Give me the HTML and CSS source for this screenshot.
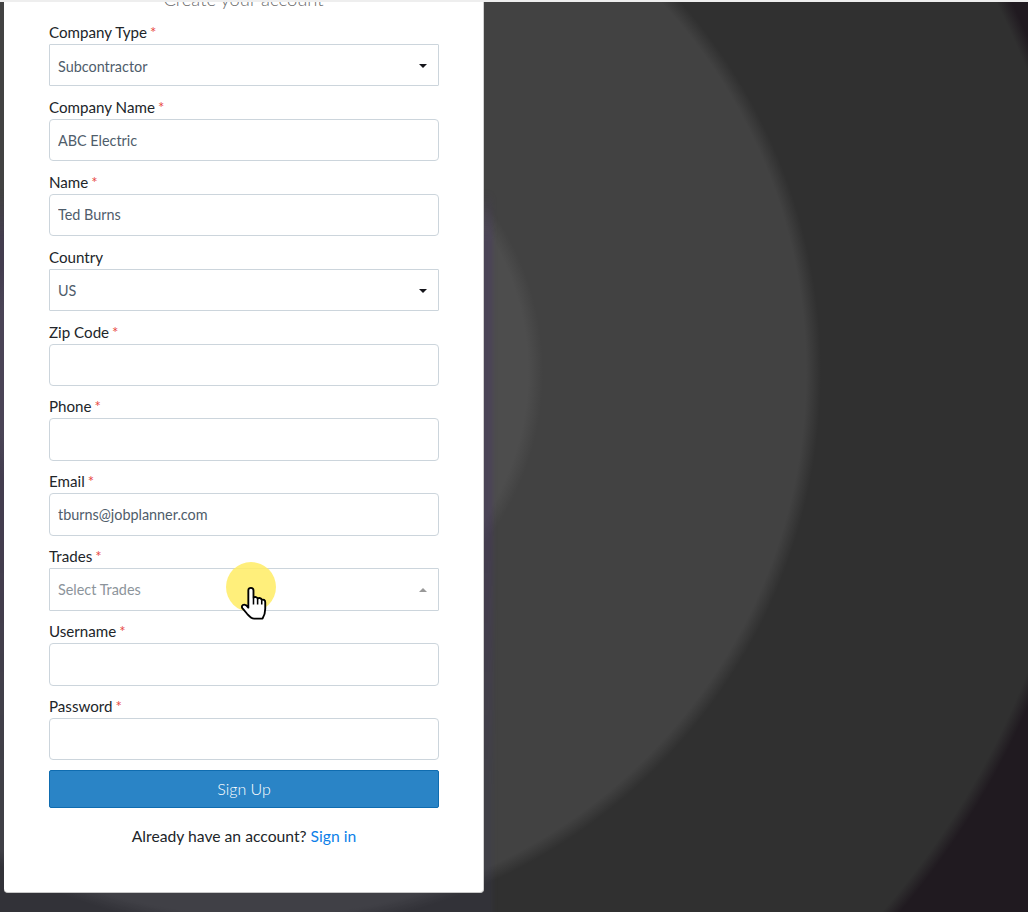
FILE: index.html
```html
<!DOCTYPE html>
<html lang="en">
<head>
<meta charset="utf-8">
<title>Create your account</title>
<link rel="stylesheet" href="styles.css">
</head>
<body>
<div class="topline"></div>
<div class="shade"></div>
<main class="card">
  <h1 class="title">Create your account</h1>
  <form class="form">
    <div class="field"><label class="label">Company Type<span class="req">*</span></label>
      <div class="control select first">Subcontractor<span class="caret"></span></div></div>
    <div class="field"><label class="label">Company Name<span class="req">*</span></label>
      <input class="control" value="ABC Electric"></div>
    <div class="field"><label class="label">Name<span class="req">*</span></label>
      <input class="control" value="Ted Burns"></div>
    <div class="field"><label class="label">Country</label>
      <div class="control select">US<span class="caret"></span></div></div>
    <div class="field"><label class="label">Zip Code<span class="req">*</span></label>
      <input class="control"></div>
    <div class="field"><label class="label">Phone<span class="req">*</span></label>
      <input class="control"></div>
    <div class="field"><label class="label">Email<span class="req">*</span></label>
      <input class="control" value="tburns@jobplanner.com"></div>
    <div class="field"><label class="label">Trades<span class="req">*</span></label>
      <div class="control select placeholder">Select Trades<span class="caret up"></span></div></div>
    <div class="field"><label class="label">Username<span class="req">*</span></label>
      <input class="control"></div>
    <div class="field"><label class="label">Password<span class="req">*</span></label>
      <input class="control" type="password"></div>
    <button class="submit" type="button">Sign Up</button>
  </form>
  <p class="signin">Already have an account? <a class="link" href="#">Sign in</a></p>
</main>
<div class="pointer">
  <svg class="hand" width="26" height="33" viewBox="0 0 25 32" aria-hidden="true">
    <path d="M7 3.2C7 1.6 8 .9 9.5.9S12 1.9 12 3.5V10.2C13.5 9.2 15.5 9.6 16 11.2 17.5 10.2 19.5 10.7 20 12.5 21.5 11.7 23.4 12.6 23.4 14.7V21C23.4 25 22.6 27.6 20.8 30.6H12.6C10.2 30.6 8 28.4 6 26.2L1.4 20.8C.1 19.2 1 17.1 3 17.1 4.6 17.1 6 18.5 7 20Z" fill="#fff" stroke="#000" stroke-width="1.8" stroke-linejoin="round"/>
    <path d="M12 10.5V17M16 11.5V17M20 12.8V17" fill="none" stroke="#000" stroke-width="1.5"/>
  </svg>
</div>
</body>
</html>
```
FILE: styles.css
```css
* { box-sizing: border-box; }
html, body { height: 100%; }
body {
  margin: 0;
  height: 912px;
  overflow: hidden;
  position: relative;
  font-family: "Lato", sans-serif;
  background: radial-gradient(circle at 262px 372px,
    #4d4d4d 0, #4d4d4d 266px, #424242 281px,
    #424242 544px, #303030 559px,
    #303030 822px, #201a20 836px);
}
.topline { height: 2px; background: #eeeeee; }
.shade {
  position: absolute;
  left: -10px;
  top: 190px;
  width: 503px;
  height: 740px;
  border-radius: 8px;
  background: linear-gradient(to bottom,
    rgba(72, 50, 110, 0),
    rgba(72, 50, 110, .3) 50px,
    rgba(72, 50, 110, .3) 340px,
    rgba(60, 60, 88, .22) 600px);
  filter: blur(2px);
}
.card {
  position: relative;
  width: 480px;
  height: 891px;
  margin-left: 4px;
  padding: 0 45px;
  overflow: hidden;
  background: #fff;
  border-right: 1px solid #d0d0d0;
  border-bottom: 1px solid #c8c8c8;
  border-radius: 0 0 4px 4px;
}
.title {
  margin: -15px 0 9px;
  height: 24px;
  font-size: 18.4px;
  line-height: 24px;
  font-weight: 300;
  color: #6c6c6c;
  text-align: center;
}
.form { width: 390px; }
.field { margin-bottom: 8.5px; }
.label {
  display: block;
  height: 24px;
  font-size: 15.15px;
  line-height: 24px;
  color: #212529;
}
.req { margin-left: 3px; color: #e8483f; font-size: 15px; }
.control {
  display: flex;
  align-items: center;
  width: 100%;
  height: 42.4px;
  padding: 0 8px;
  border: 1px solid #ccd5dc;
  border-radius: 4px;
  background: #fff;
  font-family: inherit;
  font-size: 14.4px;
  color: #4f5d6b;
  outline: none;
}
.select {
  padding: 2px 8px 0;
  border-radius: 1px;
}
.placeholder { color: #8c949b; padding: 0 8px; }
.caret {
  margin-left: auto;
  margin-right: 3px;
  width: 0;
  height: 0;
  border-left: 4px solid transparent;
  border-right: 4px solid transparent;
  border-top: 4px solid #15151b;
}
.caret.up {
  margin-top: 2px;
  border-top: 0;
  border-bottom: 4px solid #999;
}
.submit {
  display: block;
  width: 100%;
  height: 38px;
  margin-top: 10px;
  padding: 0 0 2px;
  border: 1px solid #0f6cb0;
  border-radius: 2px;
  background: #2a84c6;
  font-family: inherit;
  font-size: 16px;
  font-weight: 300;
  color: #fff;
}
.signin {
  width: 390px;
  margin: 16px 0 0;
  font-size: 15.7px;
  line-height: 24px;
  text-align: center;
  color: #212529;
}
.link { color: #0d7fe8; text-decoration: none; }
.pointer {
  position: absolute;
  left: 226px;
  top: 562px;
  width: 50px;
  height: 50px;
  border-radius: 50%;
  background: rgba(255, 236, 100, .85);
}
.hand {
  position: absolute;
  left: 15px;
  top: 25px;
}
```
